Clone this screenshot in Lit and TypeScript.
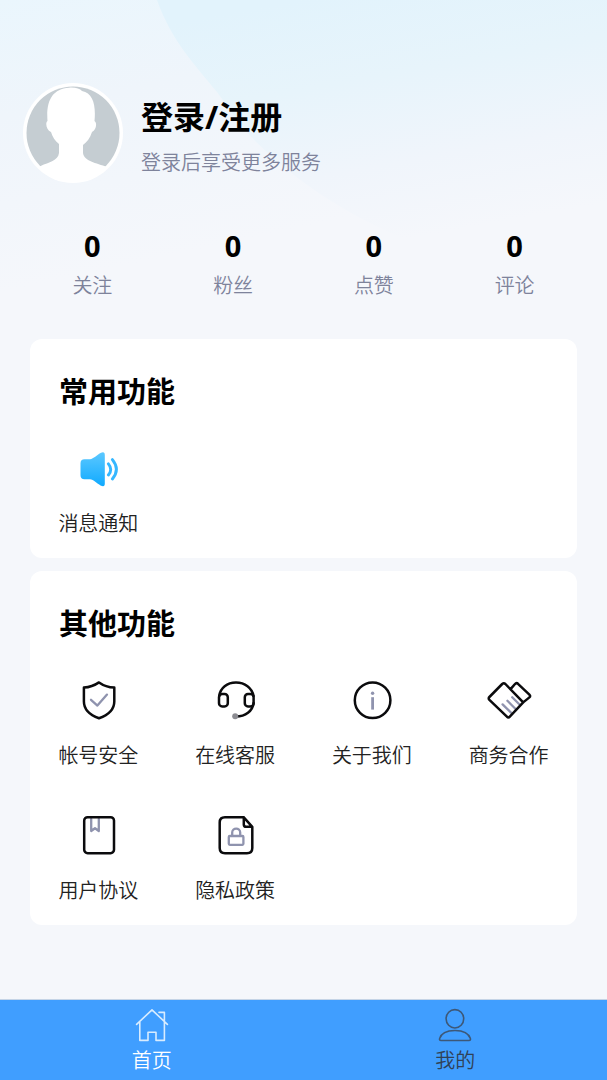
import { LitElement, html, css, svg } from "lit";
import { customElement, property, state } from "lit/decorators.js";
import { classMap } from "lit/directives/class-map.js";

const iconShapes: Record<string, unknown> = {
  speaker: svg`
    <defs>
      <linearGradient id="g" x1="0" y1="0" x2="0" y2="1">
        <stop offset="0" stop-color="#5cc8ff" />
        <stop offset="1" stop-color="#10aaff" />
      </linearGradient>
    </defs>
    <path fill="url(#g)" d="M10.5 15.3H16C19.5 14.8 23 10.8 26.5 9C29.5 7.5 30.8 8.3 30.8 11V39.5C30.8 42.2 29.5 43 26.5 41.4C23 39.6 19.5 35.6 16 35.3H10.5Q6.5 35.3 6.5 31.3V19.3Q6.5 15.3 10.5 15.3Z" />
    <path class="wave" d="M34.4 19.8Q39 25.4 34.4 31M38.4 15.6Q46.4 25.4 38.4 35" />`,
  shield: svg`
    <path class="dark" d="M25 6.4Q18 11.2 9.9 11.6V25.5C9.9 34.2 17 39.4 25 42.3C33 39.4 40.3 34.2 40.3 25.5V11.6Q31.8 11.2 25 6.4Z" />
    <path class="soft" d="M17 23.8L23.4 29.6L33 18.6" />`,
  headset: svg`
    <path class="dark" d="M8.2 20C9.4 12 16 6.6 25 6.6S40.8 12 42.6 20M42.6 27C41.6 35 34.5 40.4 25 40.6" />
    <rect class="dark" x="8" y="18" width="8.8" height="12.4" rx="3.2" />
    <rect class="dark" x="33.8" y="18" width="8.8" height="12.4" rx="3.2" />
    <circle cx="24.2" cy="40.3" r="3" fill="#8c8c92" />`,
  info: svg`
    <circle class="dark" cx="24.6" cy="24.3" r="17.8" />
    <path class="soft flat" d="M24.6 21.2V33.6" />
    <circle cx="24.6" cy="17.2" r="1.7" fill="#8f93ae" />`,
  deal: svg`
    <path class="soft" d="M17.6 28.4L26 36.6M22.4 24.8L30.6 33M27.2 21.2L35 29" />
    <path class="dark" d="M4.4 21L17.2 8Q18.8 6.6 20.4 8L38.2 26.4L24.8 40.6Q23.4 42.2 21.9 40.6L4.4 23.8Q3 22.4 4.4 21ZM26 12.6L29.8 8.2Q31.4 6.4 33 7.8L44.4 18.6Q45.8 20 44.4 21.4L38.2 26.4" />`,
  book: svg`
    <path class="soft" d="M17.2 7.8V20L21 17.2L24.8 20V7.8" />
    <rect class="dark" x="10.2" y="6.2" width="29.8" height="36" rx="3.4" />`,
  privacy: svg`
    <path class="dark" d="M32.8 6.2H14Q8.7 6.2 8.7 11.4V37Q8.7 42.2 14 42.2H36Q41.3 42.2 41.3 37V15.8L32.8 6.4V13.4Q32.8 15.8 35.2 15.8H41" />
    <rect class="soft" x="17.8" y="25" width="14.6" height="8.8" rx="1" />
    <path class="soft" d="M21.2 24.6V21.6C21.2 16.4 29.2 16.4 29.2 21.6V24.6" />`,
};

@customElement("line-icon")
class LineIcon extends LitElement {
  @property() name = "";
  static styles = css`
    :host { display: block; width: 48px; height: 48px; }
    svg { display: block; width: 100%; height: 100%; }
    .dark, .soft, .wave { fill: none; stroke-linecap: round; stroke-linejoin: round; }
    .dark { stroke: #0b0b0d; stroke-width: 2.5; }
    .soft { stroke: #8f93ae; stroke-width: 2.3; }
    .flat { stroke-linecap: butt; stroke-width: 2.8; }
    .wave { stroke: #35b7ff; stroke-width: 2.9; }
  `;
  render() {
    return html`<svg viewBox="0 0 48 48" aria-hidden="true">${iconShapes[this.name]}</svg>`;
  }
}

interface Entry { icon: string; label: string; }

@customElement("feature-card")
class FeatureCard extends LitElement {
  @property() heading = "";
  @property({ attribute: false }) entries: Entry[] = [];
  static styles = css`
    :host { display: block; padding: 33px 0 20px; border-radius: 12px; background: #fff; }
    h2 { margin: 0 0 32px; padding: 0 29px; font-size: 29px; line-height: 40px; font-weight: 700; color: #000; }
    .grid { display: grid; grid-template-columns: repeat(4, 1fr); row-gap: 41px; }
    button {
      display: flex; flex-direction: column; align-items: center; gap: 18px;
      padding: 0; border: 0; background: none; cursor: pointer;
      font: inherit; font-size: 20px; line-height: 28px; color: #222; white-space: nowrap;
    }
  `;
  render() {
    return html`
      <h2>${this.heading}</h2>
      <div class="grid">
        ${this.entries.map((e) => html`
          <button type="button"><line-icon name=${e.icon}></line-icon><span>${e.label}</span></button>
        `)}
      </div>`;
  }
}

@customElement("app-root")
class AppRoot extends LitElement {
  @state() private tab = "home";

  private stats = [
    { label: "关注", value: 0 },
    { label: "粉丝", value: 0 },
    { label: "点赞", value: 0 },
    { label: "评论", value: 0 },
  ];
  private common: Entry[] = [{ icon: "speaker", label: "消息通知" }];
  private other: Entry[] = [
    { icon: "shield", label: "帐号安全" },
    { icon: "headset", label: "在线客服" },
    { icon: "info", label: "关于我们" },
    { icon: "deal", label: "商务合作" },
    { icon: "book", label: "用户协议" },
    { icon: "privacy", label: "隐私政策" },
  ];

  static styles = css`
    :host {
      display: flex; flex-direction: column; position: relative; min-height: 100vh;
      background: #f5f7fb; color: #000;
      font-family: "Open Sans", "Noto Sans CJK SC", sans-serif; font-weight: 350;
    }
    .backdrop { position: absolute; top: 0; left: 0; width: 100%; height: 330px; }
    main { position: relative; flex: 1; padding-top: 83px; }
    .profile { display: flex; align-items: center; gap: 18px; padding: 0 23px; color: inherit; text-decoration: none; }
    .avatar { width: 100px; height: 100px; flex: none; }
    h1 { margin: 0; padding: 4px 0 8px; font-size: 32px; line-height: 48px; font-weight: 700; }
    .profile p { margin: 0; font-size: 20px; line-height: 28px; color: #7e839b; }
    .stats { display: grid; grid-template-columns: repeat(4, 1fr); margin: 43px 22px 39px; }
    .stat { display: flex; flex-direction: column-reverse; gap: 6px; text-align: center; }
    dt { font-size: 20px; line-height: 28px; color: #7e839b; }
    dd { margin: 0; font-size: 29px; line-height: 40px; font-weight: 700; }
    .cards { display: grid; gap: 13px; padding: 0 30px 40px; }
    nav {
      position: sticky; bottom: 0; display: grid; grid-template-columns: 1fr 1fr;
      border-top: 1px solid #c5d4e6; background: #409eff;
    }
    nav a {
      display: flex; flex-direction: column; align-items: center; gap: 4px; padding: 7px 0 5px;
      font-size: 20px; line-height: 28px; color: #304156; text-decoration: none;
    }
    nav a.active { color: #fff; }
    nav svg { width: 36px; height: 36px; fill: none; stroke: #3d5878; stroke-width: 1.6; stroke-linejoin: round; stroke-linecap: round; }
    nav .active svg { stroke: #d8ecff; }
  `;

  private pick(e: Event, tab: string) {
    e.preventDefault();
    this.tab = tab;
  }

  render() {
    return html`
      <svg class="backdrop" viewBox="0 0 607 330" preserveAspectRatio="none" aria-hidden="true">
        <defs>
          <linearGradient id="base" gradientUnits="userSpaceOnUse" x1="0" y1="0" x2="60" y2="280">
            <stop offset="0" stop-color="#eaf6fd" />
            <stop offset="0.4" stop-color="#eff5fb" />
            <stop offset="1" stop-color="#f5f7fb" />
          </linearGradient>
          <linearGradient id="sweep" gradientUnits="userSpaceOnUse" x1="300" y1="0" x2="345" y2="250">
            <stop offset="0" stop-color="#e2f3fc" />
            <stop offset="0.35" stop-color="#e7f4fb" />
            <stop offset="0.7" stop-color="#f0f5fb" />
            <stop offset="1" stop-color="#f5f7fb" />
          </linearGradient>
        </defs>
        <rect width="607" height="330" fill="url(#base)" />
        <path fill="url(#sweep)" d="M157 0C172 42 196 66 217 92C236 118 246 134 267 152C304 186 350 218 430 250L607 300V0Z" />
      </svg>
      <main>
        <a class="profile" href="#login">
          <svg class="avatar" viewBox="0 0 100 100" role="img" aria-label="头像">
            <circle cx="50" cy="50" r="50" fill="#fff" />
            <clipPath id="face"><circle cx="50" cy="50" r="46.5" /></clipPath>
            <path clip-path="url(#face)" fill="#c5cdd2" d="M0 0H100V92L84.3 84C73 80 61 78 60 70V62C64 59 67 55 69 49C73 47 74.5 40 71.5 38C73 22 70 10 59 8C57 5.500 52 4.200 46 4.700C29 6 23 18 24.500 38C22 40 23.500 47 28 49C29.500 54 32 58 36 61V70C35 78 26 79 17.700 83L0 92Z" />
          </svg>
          <div>
            <h1>登录/注册</h1>
            <p>登录后享受更多服务</p>
          </div>
        </a>
        <dl class="stats">
          ${this.stats.map((s) => html`<div class="stat"><dt>${s.label}</dt><dd>${s.value}</dd></div>`)}
        </dl>
        <div class="cards">
          <feature-card heading="常用功能" .entries=${this.common}></feature-card>
          <feature-card heading="其他功能" .entries=${this.other}></feature-card>
        </div>
      </main>
      <nav>
        <a href="#home" class=${classMap({ active: this.tab === "home" })} @click=${(e: Event) => this.pick(e, "home")}>
          <svg viewBox="0 0 36 36" aria-hidden="true">
            <path d="M2.6 17.4L18 2.8L33.4 17.4M5.8 15V33.4H14V25.2H22V33.4H30.4V15M25 5.4H30.4V13.6" />
          </svg>
          <span>首页</span>
        </a>
        <a href="#mine" class=${classMap({ active: this.tab === "mine" })} @click=${(e: Event) => this.pick(e, "mine")}>
          <svg viewBox="0 0 36 36" aria-hidden="true">
            <ellipse cx="17.9" cy="11.8" rx="8.8" ry="9.2" />
            <path d="M4 33.5H32Q33.8 33.5 33.4 31.6C31.6 26 26 23.5 18 23.5S4.2 26 2.6 31.6Q2.2 33.5 4 33.5Z" />
          </svg>
          <span>我的</span>
        </a>
      </nav>`;
  }
}
